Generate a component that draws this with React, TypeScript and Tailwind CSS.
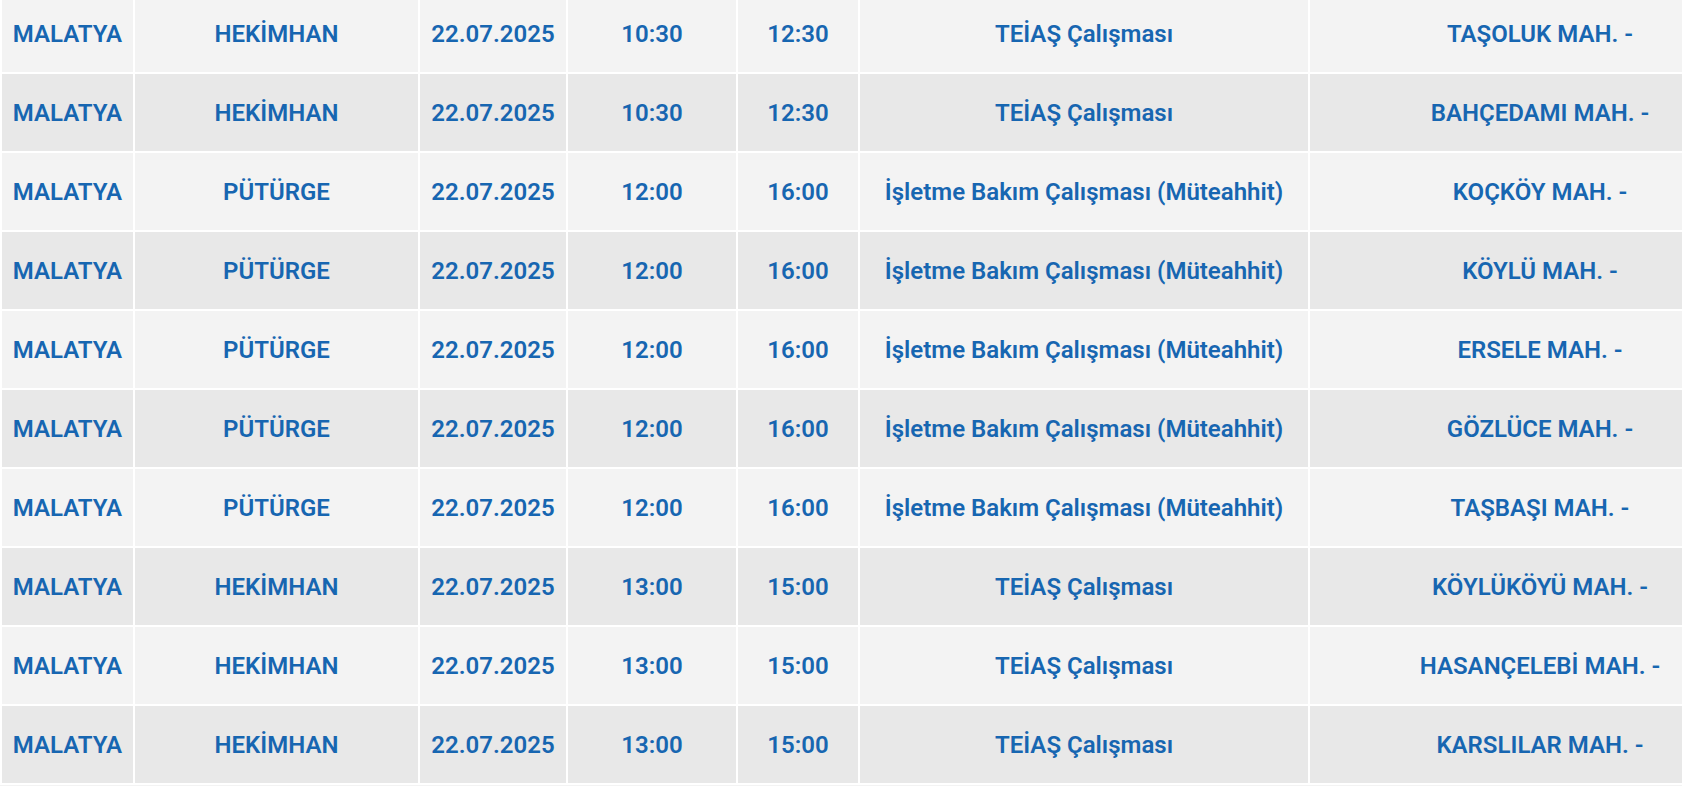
import React from "react";

const rows = [
  ["MALATYA", "HEKİMHAN", "22.07.2025", "10:30", "12:30", "TEİAŞ Çalışması", "TAŞOLUK MAH. -"],
  ["MALATYA", "HEKİMHAN", "22.07.2025", "10:30", "12:30", "TEİAŞ Çalışması", "BAHÇEDAMI MAH. -"],
  ["MALATYA", "PÜTÜRGE", "22.07.2025", "12:00", "16:00", "İşletme Bakım Çalışması (Müteahhit)", "KOÇKÖY MAH. -"],
  ["MALATYA", "PÜTÜRGE", "22.07.2025", "12:00", "16:00", "İşletme Bakım Çalışması (Müteahhit)", "KÖYLÜ MAH. -"],
  ["MALATYA", "PÜTÜRGE", "22.07.2025", "12:00", "16:00", "İşletme Bakım Çalışması (Müteahhit)", "ERSELE MAH. -"],
  ["MALATYA", "PÜTÜRGE", "22.07.2025", "12:00", "16:00", "İşletme Bakım Çalışması (Müteahhit)", "GÖZLÜCE MAH. -"],
  ["MALATYA", "PÜTÜRGE", "22.07.2025", "12:00", "16:00", "İşletme Bakım Çalışması (Müteahhit)", "TAŞBAŞI MAH. -"],
  ["MALATYA", "HEKİMHAN", "22.07.2025", "13:00", "15:00", "TEİAŞ Çalışması", "KÖYLÜKÖYÜ MAH. -"],
  ["MALATYA", "HEKİMHAN", "22.07.2025", "13:00", "15:00", "TEİAŞ Çalışması", "HASANÇELEBİ MAH. -"],
  ["MALATYA", "HEKİMHAN", "22.07.2025", "13:00", "15:00", "TEİAŞ Çalışması", "KARSLILAR MAH. -"],
];

const widths = ["w-[133px]", "w-[285px]", "w-[148px]", "w-[170px]", "w-[122px]", "w-[450px]", "w-[462px]"];

export default function App() {
  return (
    <div className="w-[1682px] h-[786px] overflow-hidden bg-[#f3f3f3]">
      <table className="-mt-[7px] w-[1770px] table-fixed border-collapse font-['Roboto',sans-serif] text-[24px] font-semibold text-[#1766b1]">
        <colgroup>
          {widths.map((w, i) => (
            <col key={i} className={w} />
          ))}
        </colgroup>
        <tbody>
          {rows.map((r, i) => (
            <tr key={i} className={`h-[79px] ${i % 2 === 0 ? "bg-[#f3f3f3]" : "bg-[#e8e8e8]"}`}>
              {r.map((c, j) => (
                <td key={j} className="border-2 border-white p-0 text-center align-middle whitespace-nowrap">
                  {c}
                </td>
              ))}
            </tr>
          ))}
        </tbody>
      </table>
    </div>
  );
}
